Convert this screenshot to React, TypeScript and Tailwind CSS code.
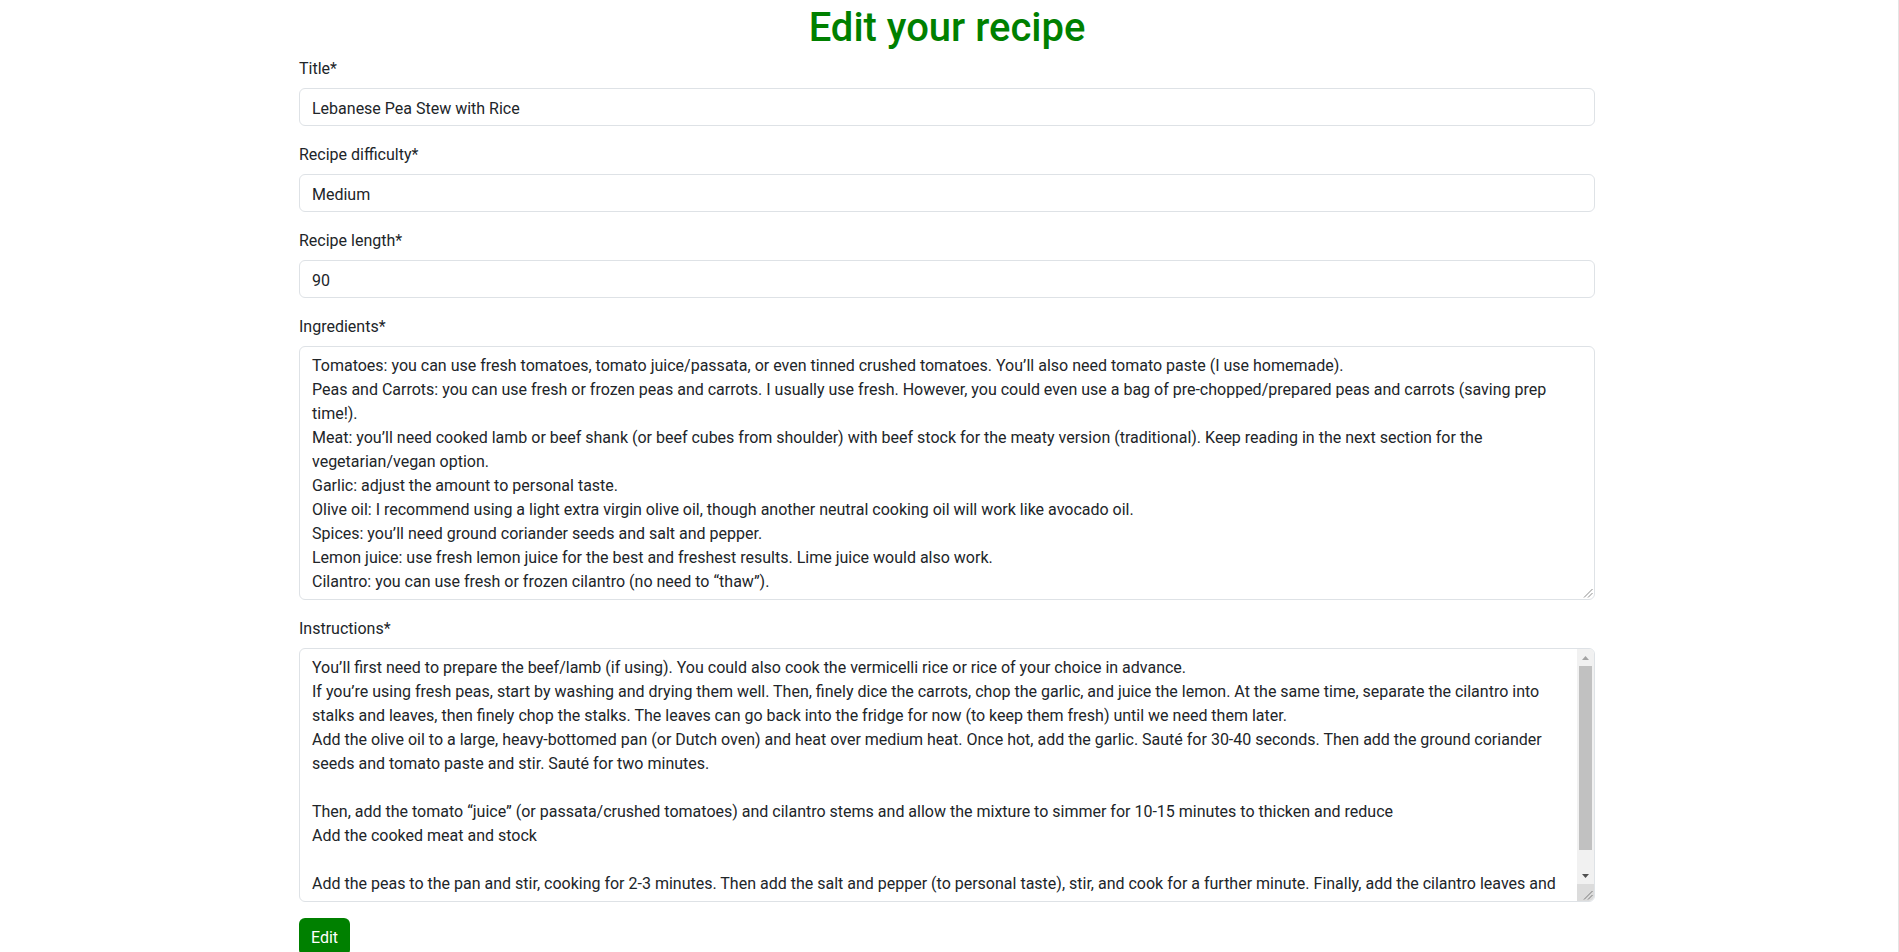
import React from "react";

const ingredients = [
  "Tomatoes: you can use fresh tomatoes, tomato juice/passata, or even tinned crushed tomatoes. You\u2019ll also need tomato paste (I use homemade).",
  "Peas and Carrots: you can use fresh or frozen peas and carrots. I usually use fresh. However, you could even use a bag of pre-chopped/prepared peas and carrots (saving prep",
  "time!).",
  "Meat: you\u2019ll need cooked lamb or beef shank (or beef cubes from shoulder) with beef stock for the meaty version (traditional). Keep reading in the next section for the",
  "vegetarian/vegan option.",
  "Garlic: adjust the amount to personal taste.",
  "Olive oil: I recommend using a light extra virgin olive oil, though another neutral cooking oil will work like avocado oil.",
  "Spices: you\u2019ll need ground coriander seeds and salt and pepper.",
  "Lemon juice: use fresh lemon juice for the best and freshest results. Lime juice would also work.",
  "Cilantro: you can use fresh or frozen cilantro (no need to \u201cthaw\u201d).",
];

const instructions = [
  "You\u2019ll first need to prepare the beef/lamb (if using). You could also cook the vermicelli rice or rice of your choice in advance.",
  "If you\u2019re using fresh peas, start by washing and drying them well. Then, finely dice the carrots, chop the garlic, and juice the lemon. At the same time, separate the cilantro into",
  "stalks and leaves, then finely chop the stalks. The leaves can go back into the fridge for now (to keep them fresh) until we need them later.",
  "Add the olive oil to a large, heavy-bottomed pan (or Dutch oven) and heat over medium heat. Once hot, add the garlic. Saut\u00e9 for 30-40 seconds. Then add the ground coriander",
  "seeds and tomato paste and stir. Saut\u00e9 for two minutes.",
  "",
  "Then, add the tomato \u201cjuice\u201d (or passata/crushed tomatoes) and cilantro stems and allow the mixture to simmer for 10-15 minutes to thicken and reduce",
  "Add the cooked meat and stock",
  "",
  "Add the peas to the pan and stir, cooking for 2-3 minutes. Then add the salt and pepper (to personal taste), stir, and cook for a further minute. Finally, add the cilantro leaves and",
];

function Grip({ color = "#8c8c8c" }: { color?: string }) {
  return (
    <svg width="10" height="10" viewBox="0 0 10 10" className="block">
      <line x1="1" y1="9.5" x2="9.5" y2="1" stroke={color} strokeWidth="1" />
      <line x1="5" y1="9.5" x2="9.5" y2="5" stroke={color} strokeWidth="1" />
    </svg>
  );
}

function Lines({ lines }: { lines: string[] }) {
  return (
    <>
      {lines.map((l, i) => (
        <div key={i} className="h-6 leading-[25px] whitespace-pre">
          {l}
        </div>
      ))}
    </>
  );
}

function Field({ label, value }: { label: string; value: string }) {
  return (
    <div className="mb-4">
      <label className="block h-6 mb-2 leading-[26px]">{label}</label>
      <input
        readOnly
        value={value}
        className="block w-full h-[38px] px-3 pt-[7px] pb-[5px] leading-6 border border-[#dee2e6] rounded-[6px] bg-white text-[#212529] outline-none"
      />
    </div>
  );
}

export default function App() {
  return (
    <div className="min-h-screen bg-white border-r border-[#e4e4e4] text-[#212529] text-[16px] font-['Roboto','Liberation_Sans',sans-serif]">
      <div className="ml-[299px] w-[1296px]">
        <h1 className="h-[48px] mb-2 text-center text-[40px] leading-[55px] font-medium text-[#008000] overflow-visible">
          Edit your recipe
        </h1>
        <Field label="Title*" value="Lebanese Pea Stew with Rice" />
        <Field label="Recipe difficulty*" value="Medium" />
        <Field label="Recipe length*" value="90" />

        <div className="mb-4">
          <label className="block h-6 mb-2 leading-[26px]">Ingredients*</label>
          <div className="relative border border-[#dee2e6] rounded-[6px] px-3 py-[6px] overflow-hidden">
            <Lines lines={ingredients} />
            <div className="absolute right-[1px] bottom-[1px]">
              <Grip />
            </div>
          </div>
        </div>

        <div className="mb-4">
          <label className="block h-6 mb-2 leading-[26px]">Instructions*</label>
          <div className="flex h-[254px] border border-[#dee2e6] rounded-[6px] overflow-hidden">
            <div className="flex-1 overflow-hidden px-3 py-[6px]">
              <Lines lines={instructions} />
            </div>
            <div className="w-[17px] flex flex-col bg-[#f1f1f1]">
              <div className="h-[17px] flex items-center justify-center">
                <svg width="7" height="4" viewBox="0 0 7 4">
                  <polygon points="0,4 7,4 3.5,0" fill="#a3a3a3" />
                </svg>
              </div>
              <div className="flex-1 flex flex-col">
                <div className="h-[184px] mx-[2px] bg-[#c1c1c1]" />
              </div>
              <div className="h-[17px] flex items-center justify-center">
                <svg width="7" height="4" viewBox="0 0 7 4">
                  <polygon points="0,0 7,0 3.5,4" fill="#505050" />
                </svg>
              </div>
              <div className="h-[17px] bg-[#dcdcdc] flex items-end justify-end pr-[1px] pb-[1px]">
                <Grip color="#7a7a7a" />
              </div>
            </div>
          </div>
        </div>

        <button className="h-[38px] px-3 pt-[7px] pb-[5px] leading-6 rounded-[6px] bg-[#008000] text-white">
          Edit
        </button>
      </div>
    </div>
  );
}
